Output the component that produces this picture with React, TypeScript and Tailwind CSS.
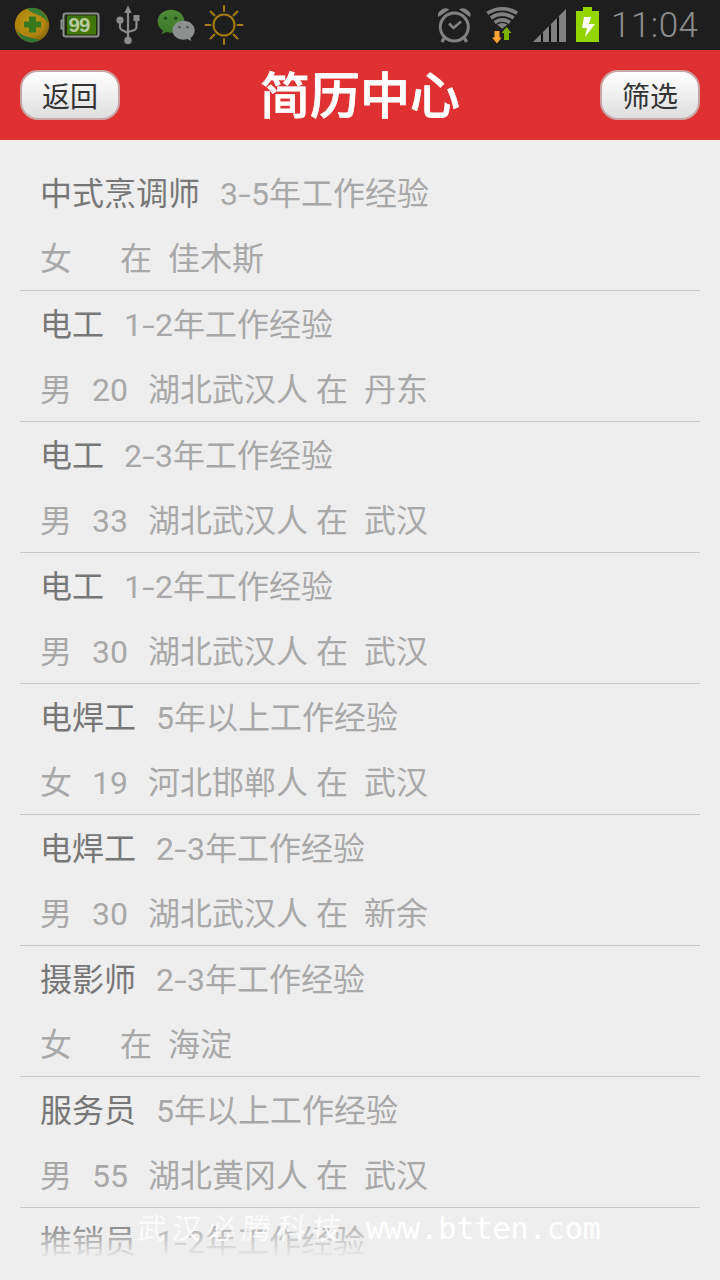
import React from "react";

type Resume = { job: string; exp: string; sex: string; age?: string; from?: string; city: string };

const resumes: Resume[] = [
  { job: "中式烹调师", exp: "3-5年工作经验", sex: "女", city: "佳木斯" },
  { job: "电工", exp: "1-2年工作经验", sex: "男", age: "20", from: "湖北武汉人", city: "丹东" },
  { job: "电工", exp: "2-3年工作经验", sex: "男", age: "33", from: "湖北武汉人", city: "武汉" },
  { job: "电工", exp: "1-2年工作经验", sex: "男", age: "30", from: "湖北武汉人", city: "武汉" },
  { job: "电焊工", exp: "5年以上工作经验", sex: "女", age: "19", from: "河北邯郸人", city: "武汉" },
  { job: "电焊工", exp: "2-3年工作经验", sex: "男", age: "30", from: "湖北武汉人", city: "新余" },
  { job: "摄影师", exp: "2-3年工作经验", sex: "女", city: "海淀" },
  { job: "服务员", exp: "5年以上工作经验", sex: "男", age: "55", from: "湖北黄冈人", city: "武汉" },
  { job: "推销员", exp: "1-2年工作经验", sex: "", city: "" },
];

function StatusBar() {
  return (
    <div className="flex h-[50px] shrink-0 bg-[#1e1e1e]">
      <svg width="600" height="50" viewBox="0 0 600 50" className="shrink-0">
        <defs>
          <radialGradient id="ball" cx=".45" cy=".4" r=".6">
            <stop offset="0" stopColor="#b99a16" />
            <stop offset=".7" stopColor="#b0830f" />
            <stop offset="1" stopColor="#7d6410" />
          </radialGradient>
          <linearGradient id="charge" x1="0" y1="0" x2="1" y2="1">
            <stop offset="0" stopColor="#3c700b" />
            <stop offset="1" stopColor="#477b0d" />
          </linearGradient>
          <linearGradient id="chat" x1="0" y1="0" x2="0" y2="1">
            <stop offset="0" stopColor="#4d8c35" />
            <stop offset="1" stopColor="#3d772a" />
          </linearGradient>
        </defs>
        <circle cx="32" cy="25.200" r="17.200" fill="url(#ball)" />
        <path d="M27 9C35 5 47 12 48.500 23C44 15 33 14.500 27 9Z" fill="#397d32" />
        <path d="M17.500 31C22 37 33 38 40 40C31 45.500 20 41 17.500 31Z" fill="#317331" />
        <path d="M29.500 16.500h6q.5 0 .5.500v4.500h4.500q.5 0 .5.500v5q0 .5-.5.500h-4.500v4.500q0 .5-.5.500h-6q-.5 0-.5-.500v-4.500h-4.500q-.5 0-.5-.500v-5q0-.5.500-.500h4.500v-4.500q0-.5.500-.500z" fill="#39781f" />

        <rect x="63.500" y="13.500" width="35" height="23" rx="2" fill="#20290d" stroke="#8b9093" strokeWidth="2" />
        <path d="M63 20.500h-1.500v8h1.500" fill="none" stroke="#8b9093" strokeWidth="2" />
        <rect x="67" y="15.500" width="29" height="19" fill="url(#charge)" />
        <text x="68.500" y="32" fontFamily="Liberation Sans" fontWeight="700" fontSize="20.500" letterSpacing="-.8" fill="#b7c99d">99</text>

        <g stroke="#8b8b8b" strokeWidth="2.200" fill="none">
          <path d="M128 11V40M120 22v5q0 2 2 3l6 3M136.500 20v7q0 2-2 3l-6.500 2" />
        </g>
        <g fill="#8b8b8b">
          <path d="M128 5.500l3.700 7.500h-7.400z" />
          <circle cx="120" cy="20.200" r="3.600" />
          <circle cx="128" cy="40.500" r="3.800" />
          <path d="M133.500 15h6v6h-6z" />
        </g>

        <path d="M171 9.800c-7.300 0-13.400 5-13.400 11.700 0 3.800 2 7 5.300 9.200l-1 3.500 4.500-2.200c8 2.500 18-2 18-10.500 0-6.700-6-11.700-13.400-11.700z" fill="url(#chat)" />
        <path d="M183.500 20.700c-6 0-11 4.200-11 9.500 0 6.800 7.600 11 14.600 8.900l4.200 2-.9-3.100c2.700-1.800 4.300-4.600 4.300-7.800 0-5.300-5.200-9.500-11.200-9.500z" fill="#8e9090" />
        <g fill="#214b18"><circle cx="165.600" cy="18.200" r="1.700" /><circle cx="175.800" cy="18.200" r="1.700" /></g>
        <g fill="#555"><circle cx="179.500" cy="27.300" r="1.300" /><circle cx="187.500" cy="27.300" r="1.300" /></g>

        <g fill="none" stroke="#a47c0c" strokeWidth="2" strokeLinecap="round">
          <circle cx="224" cy="25" r="10.500" />
          <path d="M224 6v5M224 39v5M205.500 25h5M237.500 25h5M210.500 11.500l4 4M233.500 34.500l4 4M210.500 38.500l4-4M233.500 15.500l4-4" />
        </g>

        <g fill="none" stroke="#818181">
          <circle cx="454.300" cy="27" r="14" strokeWidth="3" />
          <path d="M449 23.500l4.500 4.500 7.500-6.500" strokeWidth="2.700" />
          <path d="M444.500 37.500l-2.500 4.500M464.100 37.500l2.500 4.500" strokeWidth="3.400" />
        </g>
        <path d="M438.500 17q-2-3.500 2-6.500 4.500-4 8.800-1zM470 17q2-3.500-2-6.500-4.500-4-8.800-1z" fill="#818181" />

        <g fill="none" stroke="#818181" strokeWidth="3.600">
          <path d="M487.200 13.200q15-9 30 0M490.800 17.900q11.400-7.400 22.800 0M494.600 22.400q7.600-5.200 15.200 0" />
        </g>
        <path d="M497 24.600q5.200-3 10.400 0l-5.200 4.200z" fill="#818181" />
        <path d="M494.500 31h5v6.500h2.200l-4.700 6-5-6h2.500z" fill="#ffa334" />
        <path d="M506.500 27l5 6h-2.500v7h-5v-7h-2.500z" fill="#7eb100" />

        <path d="M533 42L566 9v33z" fill="#818181" />
        <path d="M541 34l2-2v10h-2zM549 26l2-2v18h-2zM557 18l2-2v26h-2z" fill="#0b0b0b" />
        <path d="M583 7h9v4h7v31h-23V11h7z" fill="#94d500" />
        <path d="M584 17h7l-2 7h6L585 37l2-9h-5z" fill="#fff" />
      </svg>
      <div className="ml-[11px] font-['Roboto',sans-serif] text-[35px] leading-[52px] font-light tracking-[0.5px] text-[#8d8d8d]">11:04</div>
    </div>
  );
}

function HeaderButton({ label }: { label: string }) {
  return (
    <button className="h-[50px] w-[100px] rounded-[18px] border-2 border-[#c9a5a5] bg-linear-to-b from-white to-[#dedede] pt-[5px] text-[28px] leading-[41px] text-[#333]">
      {label}
    </button>
  );
}

function Experience({ text }: { text: string }) {
  const [head, tail] = text.split("-");
  if (!tail) return <span>{text}</span>;
  return (
    <span>
      {head}
      <span className="inline-block w-[13px] scale-x-140 text-center">-</span>
      {tail}
    </span>
  );
}

function ResumeItem({ item }: { item: Resume }) {
  return (
    <li className="mx-5 h-[131px] shrink-0 border-b border-[#c8c8c8] px-5 pt-[2px] text-[32px] leading-[65px] whitespace-nowrap text-[#a8a8a8]">
      <div className="flex h-[65px] gap-5">
        <span className="text-[#777]">{item.job}</span>
        <Experience text={item.exp} />
      </div>
      {item.sex && (
        <div className="flex h-[63px]">
          <span>{item.sex}</span>
          <span className="ml-5">{item.age}</span>
          <span className="ml-5">{item.from}</span>
          <span className="ml-2">在</span>
          <span className="ml-4">{item.city}</span>
        </div>
      )}
    </li>
  );
}

export default function App() {
  return (
    <div lang="zh-CN" className="relative flex h-[1280px] w-[720px] flex-col overflow-hidden bg-[#eeeeee] font-['Roboto','Noto_Sans_CJK_SC',sans-serif]">
      <StatusBar />
      <header className="flex h-[90px] shrink-0 items-center justify-between bg-[#df3131] px-5">
        <HeaderButton label="返回" />
        <h1 className="pt-[5px] text-[50px] leading-[85px] font-medium text-white [-webkit-text-stroke:0.8px_white]">简历中心</h1>
        <HeaderButton label="筛选" />
      </header>
      <ul className="flex flex-1 flex-col overflow-hidden pt-5">
        {resumes.map((item, i) => (
          <ResumeItem key={i} item={item} />
        ))}
      </ul>
      <div className="absolute inset-x-0 bottom-0 h-[60px] bg-linear-to-b from-[#eeeeee]/0 to-[#eeeeee] to-65%" />
      <div className="absolute top-[1209px] left-[137px] flex leading-[40px] whitespace-pre text-white">
        <span className="w-[229px] -skew-x-6 text-[29px] tracking-[6px] opacity-80">武汉必腾科技</span>
        <span className="font-['DejaVu_Sans_Mono',monospace] text-[30px]">www.btten.com</span>
      </div>
    </div>
  );
}
